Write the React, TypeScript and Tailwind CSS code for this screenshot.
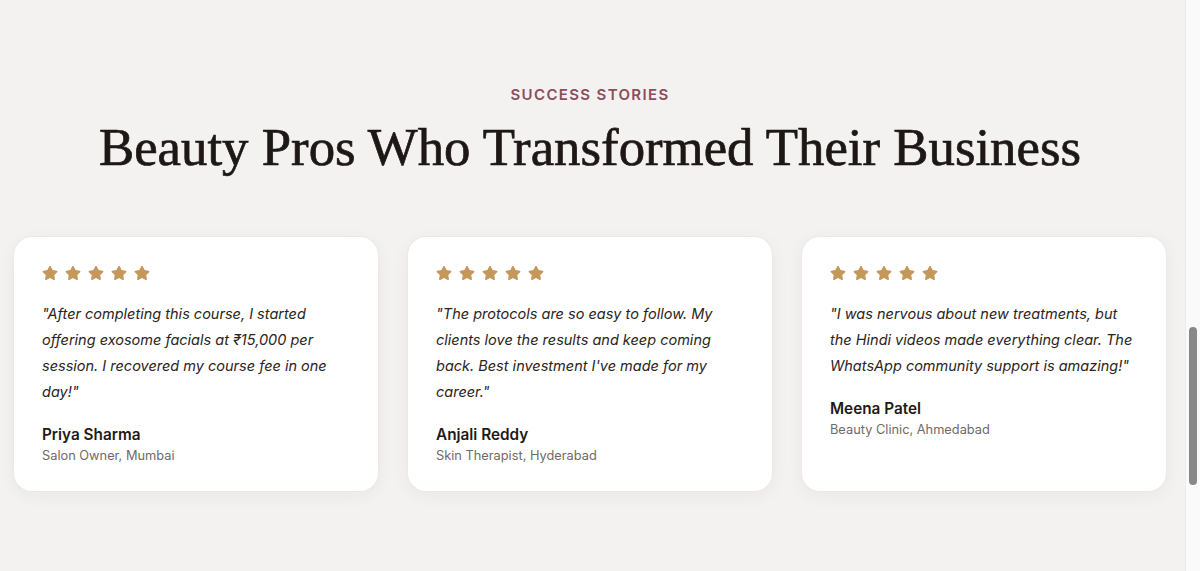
import { FaStar } from "react-icons/fa";

const testimonials = [
  {
    quote: "\"After completing this course, I started offering exosome facials at ₹15,000 per session. I recovered my course fee in one day!\"",
    name: "Priya Sharma",
    role: "Salon Owner, Mumbai",
  },
  {
    quote: "\"The protocols are so easy to follow. My clients love the results and keep coming back. Best investment I've made for my career.\"",
    name: "Anjali Reddy",
    role: "Skin Therapist, Hyderabad",
  },
  {
    quote: "\"I was nervous about new treatments, but the Hindi videos made everything clear. The WhatsApp community support is amazing!\"",
    name: "Meena Patel",
    role: "Beauty Clinic, Ahmedabad",
  },
];

function Stars() {
  return (
    <div className="flex items-center gap-[7px] text-[#c4975a]">
      {[0, 1, 2, 3, 4].map((i) => (
        <FaStar key={i} className="h-4 w-4" />
      ))}
    </div>
  );
}

function TestimonialCard({ quote, name, role }: { quote: string; name: string; role: string }) {
  return (
    <div className="rounded-[18px] bg-white px-7 pt-7 pb-[25px] shadow-[0_0_0_1px_#ece8e8,0_4px_18px_rgba(60,40,40,0.05)]">
      <Stars />
      <p className="mt-5 text-[14.5px] leading-[26px] italic text-[#2b2421]">{quote}</p>
      <div className="mt-[19px] text-[15.3px] leading-[22px] font-semibold text-[#1f1a17]">{name}</div>
      <div className="text-[12.8px] leading-5 text-[#6f6a68]">{role}</div>
    </div>
  );
}

export default function App() {
  return (
    <div className="flex h-[571px] overflow-hidden bg-[#f4f1f1] font-['Inter',sans-serif]">
      <main className="flex-1 pt-[84px] pr-[5px]">
        <div className="text-center text-[15px] font-semibold tracking-[0.09em] text-[#8d4c5c]">SUCCESS STORIES</div>
        <h1 className="mt-[8px] text-center font-['Liberation_Serif',serif] text-[52.8px] leading-[64px] font-normal text-[#1d1715] [-webkit-text-stroke:0.7px_#1d1715]">
          Beauty Pros Who Transformed Their Business
        </h1>
        <div className="ml-[14px] mt-[58px] grid w-[1152px] grid-cols-3 gap-[30px]">
          {testimonials.map((t) => (
            <TestimonialCard key={t.name} {...t} />
          ))}
        </div>
      </main>
      <aside className="w-[15px] border-l border-[#ececec] bg-[#fafafa] px-[3px] pt-[327px]">
        <div className="h-[158px] rounded-full bg-[#888888]" />
      </aside>
    </div>
  );
}
